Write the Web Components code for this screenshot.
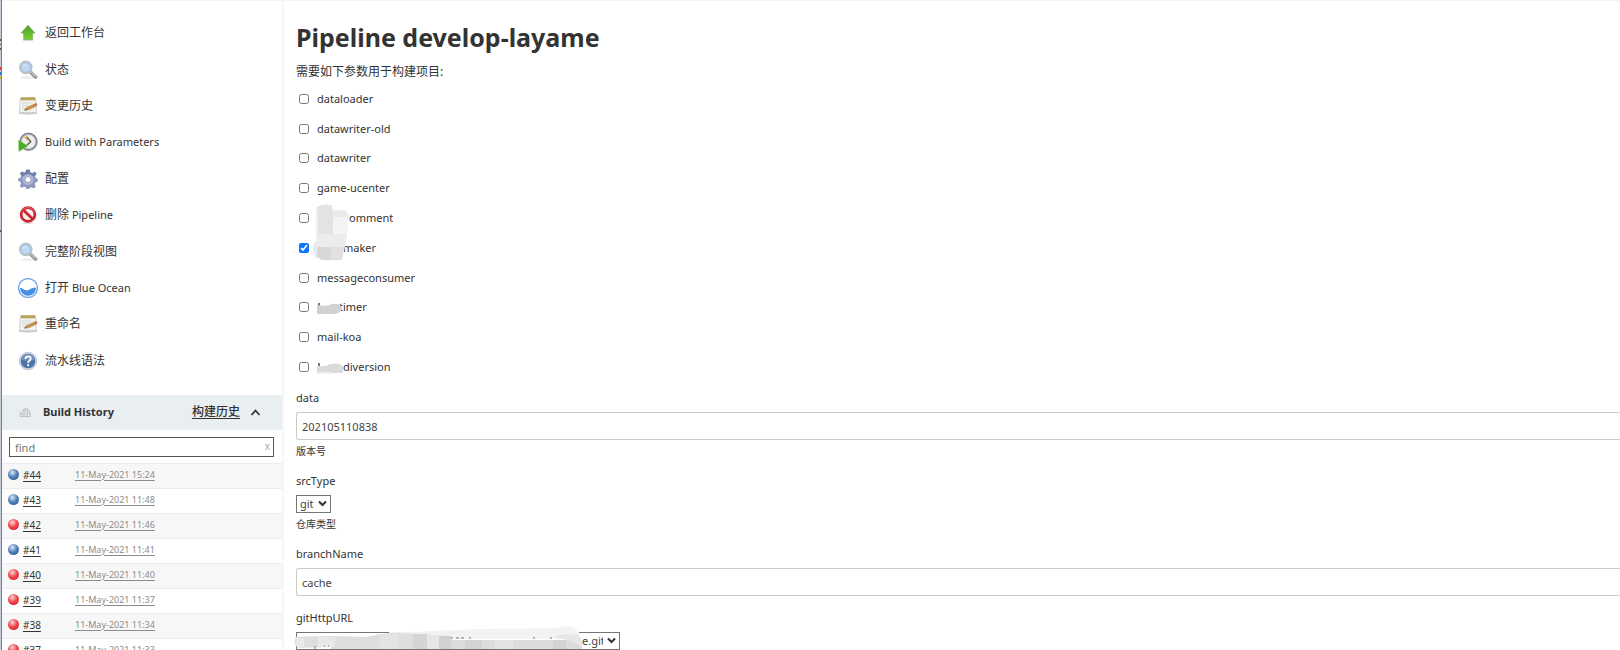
<!DOCTYPE html>
<html lang="zh-CN">
<head>
<meta charset="utf-8">
<title>Pipeline develop-layame</title>
<style>
html{height:100%;overflow:hidden}
body{margin:0;height:100%;background:#fff;color:#333;font:11px/16px "Noto Sans","Noto Sans CJK SC",sans-serif;--zh:12px;--line:#f4f6f7}
</style>
</head>
<body>
<jenkins-page>
  <side-tasks slot="side">
    <task-link icon="up"><span class="zh">返回工作台</span></task-link>
    <task-link icon="search"><span class="zh">状态</span></task-link>
    <task-link icon="notepad"><span class="zh">变更历史</span></task-link>
    <task-link icon="clock">Build with Parameters</task-link>
    <task-link icon="gear"><span class="zh">配置</span></task-link>
    <task-link icon="stop"><span class="zh">删除</span> Pipeline</task-link>
    <task-link icon="search"><span class="zh">完整阶段视图</span></task-link>
    <task-link icon="ocean"><span class="zh">打开</span> Blue Ocean</task-link>
    <task-link icon="notepad"><span class="zh">重命名</span></task-link>
    <task-link icon="help"><span class="zh">流水线语法</span></task-link>
  </side-tasks>
  <build-history slot="side"></build-history>
  <build-form slot="main"></build-form>
</jenkins-page>

<script>
function define(name, html, setup) {
  const t = document.createElement('template');
  t.innerHTML = html;
  customElements.define(name, class extends HTMLElement {
    constructor() {
      super();
      this.attachShadow({ mode: 'open' }).append(t.content.cloneNode(true));
    }
    connectedCallback() { if (setup) setup(this, this.shadowRoot); }
  });
}

const icons = {
  up: '<defs><linearGradient id="a" x2="0" y2="1"><stop stop-color="#4d9c2a"/><stop offset="1" stop-color="#7ccf2c"/></linearGradient></defs><ellipse cx="10" cy="17" rx="6" ry="1" fill="#ddd"/><path d="M10 2.3 17 10H14.500v6.600H5.700V10H3Z" fill="url(#a)" stroke="#6dae52" stroke-width=".7"/>',
  search: '<ellipse cx="10" cy="17.6" rx="8" ry="1.6" fill="#eee"/><path d="m12.6 12.2 5 4.8" stroke="#8f8f8f" stroke-width="3.4" stroke-linecap="round"/><path d="m13 12 4.8 4.5" stroke="#c9c9c9" stroke-width="1.2"/><circle cx="7.8" cy="7.4" r="6" fill="#c5dcf5" stroke="#bfc3c6" stroke-width="1.6"/><circle cx="7.8" cy="7.4" r="4.8" fill="#bfd8f3" stroke="#8fb2da" stroke-width=".7"/><path d="M4.5 7.5c0-3 3-4 5-3-2 .3-4 1.200-5 3Z" fill="#e5f1fc"/>',
  notepad: '<path d="M2.500 2h15l1.200 15.500q-8.700 1.600-17.400 0Z" fill="#f1f1ef" stroke="#c6c6c3" stroke-width=".8"/><path d="M1.300 16h17.400v2H1.300Z" fill="#cfcfcd"/><path d="M2.800 1.300h14.500v3H2.800Z" fill="#b6a557"/><path d="M4 7h9M4 9.500h6M4 12h4" stroke="#cfd0d0" stroke-width=".8"/><path d="m6.500 14.200 2-2.700 8.300-3.600 1.300 2.300-8.200 3.700Z" fill="#cf9444" stroke="#8c6b3c" stroke-width=".5"/><path d="m16.300 8 2.200-1 1 2-2 1.200Z" fill="#d16b54"/><path d="m6.500 14.200.9-1.300.6 1Z" fill="#333"/>',
  clock: '<circle cx="10.500" cy="9.700" r="8.200" fill="#eeeeea" stroke="#85859c" stroke-width="2"/><circle cx="10.500" cy="9.700" r="6.800" fill="none" stroke="#c8c8d2" stroke-width=".8"/><path d="M10.500 9.700 5.800 5.500Q7.500 3.500 9.700 3.600Z" fill="#e3c568"/><path d="m9 5.200 3.700 4.500L9 13" fill="none" stroke="#55554f" stroke-width="1.300"/><path d="M.5 8 10 14 .8 19.600Z" fill="#4aab27" stroke="#8fd36e" stroke-width=".6"/>',
  gear: '<path d="m8 .8 3.800 0 .5 2.700 2 .8 2.400-1.500 1.800 2-1.500 2.200.9 2.200 1.800.6v3l-2.200.6-.9 1.900 1.200 2.200-2 2-2.300-1.200-1.900.8-.6 1.500H8.600L8 18.400l-2-.9-2.200 1.400-2-2 1.200-2.400-.8-1.800-1.900-.6V9.300l2.200-.6.8-2-1.400-2.200 2-2 2.200 1.300 1.500-.7Z" fill="#8d97c0"/><path d="m8 .8 3.800 0 .5 2.700 2 .8 2.400-1.500 1.800 2-1.500 2.200H4.200L2 4.500l2-2 2.200 1.300 1.500-.7Z" fill="#6c81aa"/><circle cx="10" cy="10.600" r="5.600" fill="#aeb6d8"/><circle cx="10" cy="10.600" r="3" fill="#fff" stroke="#8b96bb" stroke-width=".8"/>',
  stop: '<ellipse cx="10" cy="18" rx="6" ry="1" fill="#ddd"/><circle cx="10" cy="9.500" r="6.900" fill="#f8eeee" stroke="#cb2632" stroke-width="2.800"/><path d="m5.300 5 9.400 9" stroke="#cb2632" stroke-width="2.800"/><path d="M3.600 6.800A7 7 0 0 1 16.400 6.800" fill="none" stroke="#e77982" stroke-width=".8"/>',
  ocean: '<circle cx="10" cy="10" r="9.400" fill="#fff" stroke="#74aaea" stroke-width="1.400"/><path d="M2 10c2.600-.5 4 2.500 7 2.300s3.500-3 9-2.600A8 8 0 0 1 2 10Z" fill="#4a90e2"/>',
  help: '<circle cx="10" cy="10" r="8.700" fill="#d5dbe5" stroke="#aeb9ca" stroke-width=".8"/><circle cx="10" cy="10" r="7.300" fill="#4d74a9"/><path d="M3.500 8.500a6.700 6.700 0 0 1 13 0q-6.500 3-13 0Z" fill="#7393bd"/><path d="M7.500 8q0-2.700 2.600-2.700t2.600 2.300q0 1.300-1.300 2.100t-1.200 2.300" fill="none" stroke="#fff" stroke-width="1.800"/><circle cx="10.200" cy="14.200" r="1.100" fill="#fff"/>'
};

define('jenkins-page', `
<style>
:host{display:grid;grid-template-columns:2px 280px minmax(0,1fr);min-height:100%;box-shadow:inset 0 1px #f3f4f4}
.edge{background:
  linear-gradient(#555,#555) 0 39px/1px 2px no-repeat,linear-gradient(#666,#666) 0 44px/1px 1px no-repeat,linear-gradient(#555,#555) 0 48px/1px 2px no-repeat,
  linear-gradient(#d33,#d33) 0 67px/1px 3px no-repeat,linear-gradient(#27c,#27c) 0 72px/1px 3px no-repeat,linear-gradient(#db4,#db4) 0 76px/1px 3px no-repeat,
  linear-gradient(#556,#556) 0 230px/1px 2px no-repeat,
  linear-gradient(90deg,#c5cfda 1px,#3f8bc8 1px)}
aside{padding-top:15px;min-width:0}
main{border-left:2px solid var(--line);padding:21px 0 0 12px;min-width:0}
</style>
<div class="edge"></div><aside><slot name="side"></slot></aside><main><slot name="main"></slot></main>`);

define('side-tasks', `
<style>:host{display:grid;grid-auto-rows:1fr;height:364px;margin-bottom:16px}</style><slot></slot>`);

define('task-link', `
<style>
:host{display:flex;align-items:center;padding-left:16px}
a{display:flex;align-items:center;gap:7px;color:inherit;text-decoration:none}
svg{width:20px;height:20px;flex:none}
::slotted(.zh){font-size:var(--zh)}
</style>
<a href="#"><svg viewBox="0 0 20 20" aria-hidden="true"></svg><span><slot></slot></span></a>`,
(el, root) => { root.querySelector('svg').innerHTML = icons[el.getAttribute('icon')]; });

define('build-history', `
<style>
:host{display:block}
header{display:flex;align-items:center;height:35px;background:#e9eef1;padding:0 21px 2px 16px;box-sizing:border-box}
header svg{flex:none}
h2{font-size:11px;line-height:16px;margin:0 auto 0 11px}
header a{font-size:var(--zh);font-weight:500;color:#333;margin-right:10px;text-underline-offset:2px}
.find{position:relative;margin:7px 8px 6px 7px;display:flex}
input{flex:1;min-width:0;height:20px;box-sizing:border-box;border:1px solid #555;padding:0 20px 0 5px;font:inherit;color:#333;outline:0}
input::placeholder{color:#777}
.find button{position:absolute;right:3px;top:1px;border:0;background:none;padding:0 1px;font:10px/16px "Noto Sans",sans-serif;color:#aaa}
table{width:100%;border-collapse:collapse;table-layout:fixed}
td{height:21px;padding:0 0 3px;border-top:1px solid #e9edf0;line-height:16px}
tr:nth-child(odd){background:#f7f7f7}
.n{width:67px;padding-left:6px;font-size:10px}
.n a{color:#333}
.n span{display:flex;align-items:center;gap:4px}
.d{font-size:9px}
.d a{color:#8c8c8c}
a{text-underline-offset:2px}
</style>
<header>
  <svg width="14" height="12" viewBox="0 0 14 12" aria-hidden="true"><path d="M1 9.500Q1 6 4 5.500 5 2 8 2q4.500.5 5 7.500Z" fill="#c6c8c8"/><path d="M3 9q1-3 4-3M8.500 3.500 7.500 9M10.500 5v4" stroke="#e9eaea" fill="none"/><path d="M2 10.500h11" stroke="#bfc2c2"/></svg>
  <h2>Build History</h2><a href="#">构建历史</a>
  <svg width="11" height="8" viewBox="0 0 11 8" aria-hidden="true"><path d="m1.500 7 4-4.500 4 4.500" fill="none" stroke="#333" stroke-width="1.800"/></svg>
</header>
<div class="find"><input type="text" placeholder="find" aria-label="find"><button type="button">x</button></div>
<table><tbody></tbody></table>`,
(el, root) => {
  const builds = [[44,'15:24',1],[43,'11:48',1],[42,'11:46',0],[41,'11:41',1],[40,'11:40',0],[39,'11:37',0],[38,'11:34',0],[37,'11:33',0]];
  root.querySelector('tbody').innerHTML = builds.map(([n, t, ok]) =>
    `<tr><td class="n"><span><status-ball ${ok ? 'ok' : ''}></status-ball><a href="#">#${n}</a></span></td><td class="d"><a href="#">11-May-2021 ${t}</a></td></tr>`).join('');
});

define('status-ball', `
<style>
:host{display:block;width:11px;height:11px;border-radius:50%;background:radial-gradient(circle at 40% 32%,#ffc9c9 5%,#f0484e 45%,#d92530 80%)}
:host([ok]){background:radial-gradient(circle at 40% 32%,#cfe0f2 5%,#5683bb 45%,#355f9c 80%)}
</style>`);

define('check-option', `
<style>
:host{display:flex;align-items:center;padding-left:3px}
input{width:10px;height:10px;margin:0 8px 0 0;accent-color:#0b76ff}
label{display:flex;align-items:center}
</style>
<label><input type="checkbox"><slot></slot></label>`,
(el, root) => { root.querySelector('input').checked = el.hasAttribute('checked'); });

define('form-field', `
<style>
:host{display:block;margin-bottom:14px}
.control{margin-top:6px;display:flex}
.help{font-size:10px;line-height:15px;margin-top:4px}
.help:empty{display:none}
input{flex:1;min-width:0;height:28px;box-sizing:border-box;border:1px solid #ccc;border-right:0;border-radius:3px 0 0 3px;padding:0 5px;font:inherit;color:#444;outline:0}
.pick{position:relative;display:flex}
select{appearance:none;height:18px;box-sizing:border-box;border:1px solid #767676;border-radius:0;background:#fff;font:inherit;line-height:16px;color:#444;padding:0 16px 0 3px;margin:0}
.pick svg.arrow{position:absolute;right:4px;top:5px;pointer-events:none}
:host([masked]) select{width:324px;padding-left:285px}
.smudge{position:absolute;left:-2px;top:-6px;overflow:visible;pointer-events:none}
:host(:not([masked])) .smudge{display:none}
</style>
<label for="c"></label><div class="control"></div><div class="help"></div>`,
(el, root) => {
  const value = el.getAttribute('value');
  root.querySelector('label').textContent = el.getAttribute('label');
  root.querySelector('.help').textContent = el.getAttribute('help') || '';
  root.querySelector('.control').innerHTML = el.hasAttribute('select')
    ? `<div class="pick"><select id="c"><option>${value}</option></select>
       <svg class="arrow" width="9" height="7" viewBox="0 0 9 7" aria-hidden="true"><path d="m1 1.500 3.500 3.500L8 1.500" fill="none" stroke="#333" stroke-width="2"/></svg>
       <svg class="smudge" width="288" height="24" viewBox="294 626 288 24" aria-hidden="true">
         <path d="M376 634q70-4 105-5l75-1q18-6 24 7l-4 10H380Z" fill="#f3f3f3"/>
         <path d="M389 632h190v2H389Z" fill="#f1f1f1"/>
         <path d="M452 639h124v2H452Z" fill="#fff"/>
         <path d="M296 637q30-2 70 0 18-4 32-4l53 3v13H331v-2l-33 1q-6-5-2-11Z" fill="#dfdddd"/>
         <path d="M318 637h17v10h-17Z" fill="#e9e8e8"/><path d="M295 638h9v9h-7Z" fill="#e6eae9"/>
         <path d="M380 634h18v15h-18Z" fill="#e5e4e4"/><path d="M413 634h14v15h-14Z" fill="#d4d3d6"/><path d="M427 635h12v14h-12Z" fill="#e6e6e8"/><path d="M439 636h12v13h-12Z" fill="#d1d1d1"/>
         <path d="M451 640h127l4 1v8H451Z" fill="#dddcdd"/><path d="M465 640h17v9h-17ZM553 640h13v9h-13Z" fill="#d2d3d5"/><path d="M495 640h18v9h-18Z" fill="#e3e4e4"/>
         <path d="m556 635 20-1q8 4 5 13l-6-4q-8-4-19-5Z" fill="#e6e6e6"/>
         <path d="M451 638h2M456 638h3M461 638h3M470 637v2M534 637v2M551 637v2M315 646v3M324 646h1M328 646h1" stroke="#777" fill="none"/>
       </svg></div>`
    : `<input id="c" type="text" value="${value}">`;
});

define('build-form', `
<style>
:host{display:block}
h1{font-size:25px;line-height:32px;margin:0 0 11px}
p{font-size:var(--zh);line-height:16px;margin:0 0 4px}
.options{display:grid;grid-auto-rows:1fr;height:298px;margin-bottom:8px}
.mask{display:block;height:12px;overflow:visible;position:relative;z-index:1;pointer-events:none}
</style>
<h1>Pipeline develop-layame</h1>
<p>需要如下参数用于构建项目:</p>
<div class="options">
  <check-option>dataloader</check-option>
  <check-option>datawriter-old</check-option>
  <check-option>datawriter</check-option>
  <check-option>game-ucenter</check-option>
  <check-option><svg class="mask" width="32" viewBox="317 213 32 12" aria-hidden="true">
    <path d="M316 209q6-5 16-3v5h12q5 1 5 6l-3 26-4 18q-12 1-21 0l-5-6Z" fill="#f0f0f0"/>
    <path d="M317 208q8-4 15-1l1 11h-15ZM318 218h15v17h-15Z" fill="#e4e3e3"/>
    <path d="M333 218h15l-1 17h-14Z" fill="#f4f4f4"/><path d="M333 212h12l3 6h-15Z" fill="#e9e9e9"/>
    <path d="M317 235h30l-2 13h-28Z" fill="#ececeb"/><path d="M317 248h14v13h-10l-4-4Z" fill="#d9d7d7"/><path d="M331 248h13l-2 13h-11Z" fill="#e2e0e0"/></svg>omment</check-option>
  <check-option checked><svg class="mask" width="26" viewBox="317 242 26 12" style="z-index:0" aria-hidden="true"><path d="M317 240q-7 7-1 18h3v-18Z" fill="#dfeafd"/></svg>maker</check-option>
  <check-option>messageconsumer</check-option>
  <check-option><svg class="mask" width="22" viewBox="317 302 22 12" aria-hidden="true"><path d="M318 304h2v4h-2Z" fill="#87707c"/><path d="M317 306q10 2 15-1 9-1 10 4-1 5-7 6h-18Z" fill="#d2d1d1"/></svg>timer</check-option>
  <check-option>mail-koa</check-option>
  <check-option><svg class="mask" width="26" viewBox="317 361 26 12" aria-hidden="true"><path d="M318 363h2v3h-2Z" fill="#87707c"/><path d="M317 366q9 1 13-2 11-2 13 3v6h-26Z" fill="#dadada"/><path d="M317 372h14v2h-14Z" fill="#f1f1f1"/></svg>diversion</check-option>
</div>
<form-field label="data" value="202105110838" help="版本号"></form-field>
<form-field label="srcType" value="git" select help="仓库类型"></form-field>
<form-field label="branchName" value="cache"></form-field>
<form-field label="gitHttpURL" value="e.git" select masked></form-field>`);
</script>
</body>
</html>
